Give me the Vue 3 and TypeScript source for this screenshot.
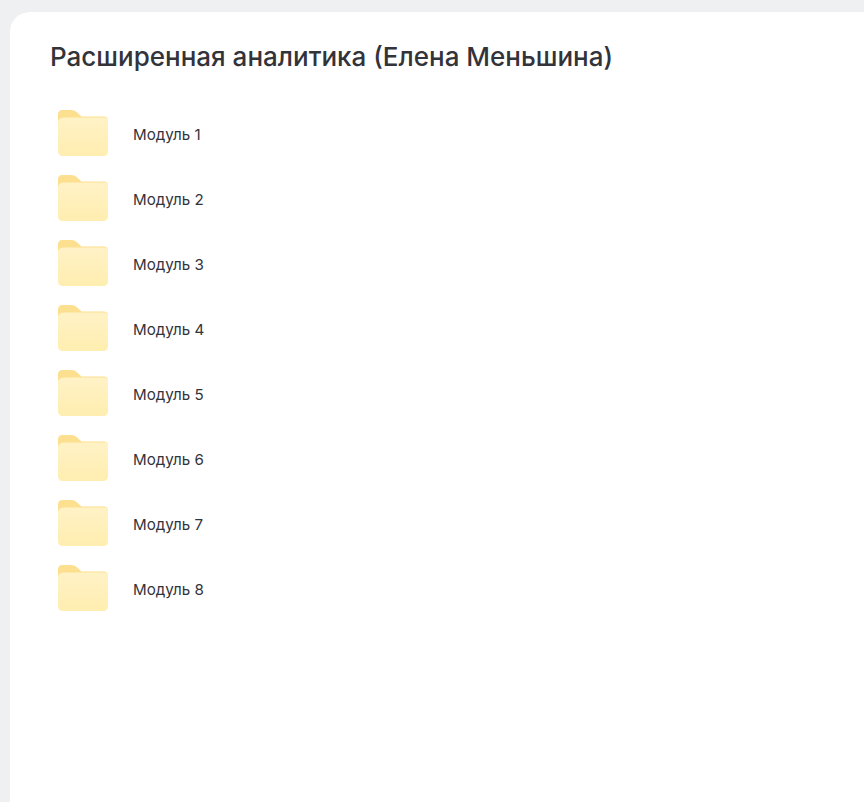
<script setup lang="ts">
const modules: string[] = [1, 2, 3, 4, 5, 6, 7, 8].map((n) => `Модуль ${n}`);
</script>

<template>
  <div class="page">
    <main class="card">
      <h1 class="title">Расширенная аналитика (Елена Меньшина)</h1>
      <ul class="list">
        <li v-for="(name, i) in modules" :key="name" class="row">
          <svg class="folder" width="50" height="46" viewBox="0 0 50 46" aria-hidden="true">
            <defs>
              <linearGradient :id="`g${i}`" x1="0" y1="0" x2="0" y2="1">
                <stop offset="0" stop-color="#fff2c6" />
                <stop offset="1" stop-color="#ffeeb0" />
              </linearGradient>
            </defs>
            <path d="M0 4C0 1.8 1.8 0 4 0H13.5C16 0 17.6 1 19.2 2.4L23.5 6.5H46C48.2 6.5 50 8 50 10V20H0Z" fill="#fde08f" />
            <path d="M0 12.5C0 10 1.8 8.2 4 7.8C10 7.2 17 7.5 23.5 7.5H47C48.8 7.5 50 8.8 50 10.5V41.5C50 44 48 46 45.5 46H4.5C2 46 0 44 0 41.5Z" :fill="`url(#g${i})`" />
          </svg>
          <span class="label">{{ name }}</span>
        </li>
      </ul>
    </main>
  </div>
</template>

<style>
html,
body {
  margin: 0;
  background: #eef0f2;
}
</style>

<style scoped>
.page {
  height: 802px;
  padding: 12px 0 0 10px;
  box-sizing: border-box;
  overflow: hidden;
  font-family: Inter, "Noto Sans", sans-serif;
  color: #33333a;
}
.card {
  height: 790px;
  background: #fff;
  border-radius: 20px 0 0 0;
  padding: 29px 0 0 40px;
  box-sizing: border-box;
}
.title {
  margin: 0;
  font-size: 26px;
  line-height: 32px;
  font-weight: 550;
  white-space: nowrap;
}
.list {
  list-style: none;
  margin: 29px 0 0;
  padding: 0 0 0 8px;
}
.row {
  display: flex;
  align-items: center;
  height: 65px;
}
.folder {
  flex: none;
  margin-bottom: 3px;
}
.label {
  margin-left: 25px;
  font-size: 15.15px;
  line-height: 20px;
}
</style>
